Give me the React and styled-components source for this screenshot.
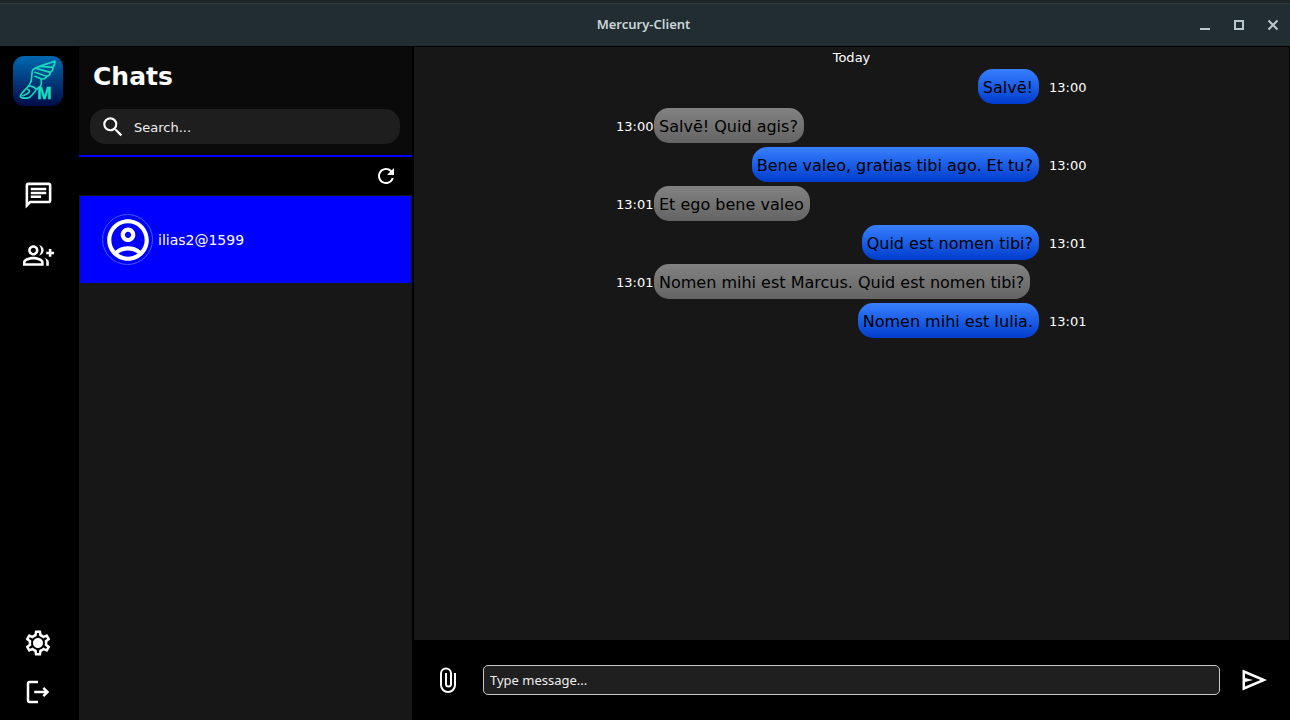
import React from "react";
import styled, { createGlobalStyle, css } from "styled-components";
import {
  MdOutlineChat,
  MdOutlineGroupAdd,
  MdOutlineLogout,
  MdOutlineSettings,
  MdOutlineAccountCircle,
  MdRefresh,
  MdSearch,
} from "react-icons/md";

const GlobalStyle = createGlobalStyle`
  * { box-sizing: border-box; }
  body {
    margin: 0;
    background: #000;
    color: #fff;
    font-family: "DejaVu Sans", sans-serif;
    font-size: 13px;
  }
  button, input { font: inherit; color: inherit; }
`;

const Window = styled.div`
  display: flex;
  flex-direction: column;
  height: 100vh;
`;

const TitleBar = styled.header`
  flex: none;
  display: grid;
  grid-template-columns: 1fr auto 1fr;
  align-items: center;
  height: 47px;
  padding: 3px 11px 0 8px;
  border-bottom: 1px solid #000;
  background: linear-gradient(#1c2528 0 3px, #2c383c 3px 4px, #222d31 4px);
`;

const WindowTitle = styled.h1`
  grid-column: 2;
  margin: 0;
  padding-bottom: 2px;
  color: #c9d6db;
  font: 600 13px/20px "Noto Sans", sans-serif;
`;

const WindowControls = styled.div`
  justify-self: end;
  display: flex;
  gap: 22px;
`;

const IconButton = styled.button`
  display: flex;
  align-items: center;
  justify-content: center;
  flex: none;
  width: ${({ $size }) => $size}px;
  height: ${({ $size }) => $size}px;
  padding: 0;
  border: 0;
  background: none;
  color: ${({ $color }) => $color || "#fff"};
  cursor: pointer;

  svg { flex: none; }
`;

const Body = styled.div`
  flex: 1;
  min-height: 0;
  display: grid;
  grid-template-columns: 79px 333px minmax(0, 1fr);
`;

const Rail = styled.nav`
  display: flex;
  flex-direction: column;
  justify-content: space-between;
  align-items: center;
  padding: 9px 3px 12px 0;
`;

const RailGroup = styled.div`
  display: flex;
  flex-direction: column;
  align-items: center;
  gap: ${({ $gap }) => $gap}px;
`;

const Logo = styled.svg`
  width: 50px;
  height: 50px;
  margin-bottom: 45px;
`;

const Sidebar = styled.aside`
  display: flex;
  flex-direction: column;
  background: #171717;
`;

const SidebarHeader = styled.div`
  padding: 15px 12px 11px 11px;
  border-bottom: 2px solid #00f;
  background: #0a0a0a;
`;

const Heading = styled.h2`
  margin: 0 3px 17px;
  font-size: 25px;
  line-height: 30px;
`;

const SearchBox = styled.label`
  display: flex;
  align-items: center;
  gap: 8px;
  height: 35px;
  padding: 0 10px;
  border-radius: 15px;
  background: #1e1e1e;
`;

const field = css`
  flex: 1;
  min-width: 0;
  outline: none;

  &::placeholder {
    color: #eee;
    opacity: 1;
  }
`;

const SearchInput = styled.input`
  ${field}
  padding: 2px 0 0;
  border: 0;
  background: none;
`;

const SidebarTools = styled.div`
  display: flex;
  justify-content: flex-end;
  padding: 7px 14px;
  background: #000;
`;

const ChatList = styled.ul`
  margin: 0;
  padding: 1px;
  list-style: none;
`;

const ChatItem = styled.button`
  display: flex;
  align-items: center;
  gap: 5px;
  width: 100%;
  height: 87px;
  padding: 0 22px;
  border: 0;
  background: #00f;
  font-size: 14px;
  cursor: pointer;
`;

const Avatar = styled.span`
  display: flex;
  align-items: center;
  justify-content: center;
  width: 51px;
  height: 51px;
  border: 1px solid #3f5fff;
  border-radius: 50%;

  svg { flex: none; }
`;

const Conversation = styled.main`
  display: flex;
  flex-direction: column;
  min-height: 0;
  padding: 0 1px 0 2px;
`;

const Messages = styled.section`
  flex: 1;
  min-height: 0;
  overflow: auto;
  display: flex;
  flex-direction: column;
  align-items: center;
  background: #171717;
`;

const Day = styled.div`
  height: 22px;
  line-height: 22px;
`;

const MessageList = styled.ol`
  display: flex;
  flex-direction: column;
  gap: 4px;
  width: 471px;
  max-width: 100%;
  margin: 0;
  padding: 0;
  list-style: none;
`;

const Message = styled.li`
  display: flex;
  align-items: center;
  flex-direction: ${({ $own }) => ($own ? "row-reverse" : "row")};
  gap: ${({ $own }) => ($own ? 10 : 0)}px;
`;

const Time = styled.time`
  flex: none;
  width: 38px;
  padding-top: 2px;
`;

const Bubble = styled.span`
  padding: 2px 6px 0 5px;
  border-radius: 15px;
  background: ${({ $own }) =>
    $own ? "linear-gradient(#3880ff, #003ccc)" : "linear-gradient(#828282, #646464)"};
  color: #000;
  font-size: 16px;
  line-height: 33px;
`;

const Composer = styled.form`
  flex: none;
  display: flex;
  align-items: center;
  gap: 19px;
  height: 80px;
  padding: 0 18px;
`;

const MessageInput = styled.input`
  ${field}
  height: 30px;
  padding: 0 6px;
  border: 1px solid #c8c8c8;
  border-radius: 5px;
  background: #1f1f1f;
  font-family: "Noto Sans", sans-serif;
`;

const messages = [
  { own: true, time: "13:00", text: "Salvē!" },
  { own: false, time: "13:00", text: "Salvē! Quid agis?" },
  { own: true, time: "13:00", text: "Bene valeo, gratias tibi ago. Et tu?" },
  { own: false, time: "13:01", text: "Et ego bene valeo" },
  { own: true, time: "13:01", text: "Quid est nomen tibi?" },
  { own: false, time: "13:01", text: "Nomen mihi est Marcus. Quid est nomen tibi?" },
  { own: true, time: "13:01", text: "Nomen mihi est Iulia." },
];

function MercuryLogo() {
  return (
    <Logo viewBox="0 0 150 150" role="img" aria-label="Mercury">
      <defs>
        <linearGradient id="logo-bg" x1="0" y1="0" x2="0" y2="1">
          <stop offset="0" stopColor="#0068b0" />
          <stop offset="1" stopColor="#000c48" />
        </linearGradient>
      </defs>
      <rect width="150" height="150" rx="34" fill="url(#logo-bg)" />
      <g fill="none" stroke="#17d9bd" strokeWidth="5" strokeLinejoin="round" strokeLinecap="round">
        <path d="M54 76 C58 64 55 50 59 42 C70 30 98 27 126 15 C126 24 124 30 119 34 C121 41 118 46 112 49 C112 56 107 60 101 61 C97 69 90 70 84 68 L66 61" />
        <path d="M119 34 L82 31 M112 49 L72 38 M101 61 L66 49" />
        <path d="M54 76 C50 94 24 108 22 121 C25 128 38 127 48 125 C60 118 64 106 74 97 C84 91 88 86 84 68" />
        <path d="M48 91 C56 88 62 92 70 99 M44 100 C54 104 50 112 30 119" />
      </g>
      <text x="73" y="128" fill="#17e0c0" stroke="#17e0c0" strokeWidth="1" fontFamily="Liberation Sans, sans-serif" fontWeight="700" fontSize="52">M</text>
    </Logo>
  );
}

function SettingsIcon() {
  return (
    <svg width="30" height="30" viewBox="0 0 24 24" fill="currentColor">
      <MdOutlineSettings size={24} />
      <circle cx="12" cy="12" r="3" />
    </svg>
  );
}

function PaperclipIcon() {
  return (
    <svg width="18" height="26" viewBox="0 0 18 26" fill="none" stroke="currentColor" strokeWidth="2">
      <path d="M16 6V18a7 7 0 0 1-14 0V6.500a5 5 0 0 1 10 0V17a2.500 2.500 0 0 1-5 0V6" />
    </svg>
  );
}

function SendIcon() {
  return (
    <svg width="32" height="32" viewBox="0 0 32 32" fill="currentColor">
      <path d="M3.500 26.500V5.500L28 16zM6 22.500 21.500 16 6 9.500V14l8 2-8 2z" />
    </svg>
  );
}

function ControlIcon({ d }) {
  return (
    <svg width="12" height="12" viewBox="0 0 12 12" fill="none" stroke="currentColor" strokeWidth="2">
      <path d={d} />
    </svg>
  );
}

export default function App() {
  return (
    <>
      <GlobalStyle />
      <Window>
        <TitleBar>
          <WindowTitle>Mercury-Client</WindowTitle>
          <WindowControls>
            <IconButton $size={12} $color="#b9c7ce" aria-label="Minimize">
              <ControlIcon d="M1 10H11" />
            </IconButton>
            <IconButton $size={12} $color="#b9c7ce" aria-label="Maximize">
              <ControlIcon d="M2 2H10V10H2Z" />
            </IconButton>
            <IconButton $size={12} $color="#b9c7ce" aria-label="Close">
              <ControlIcon d="M1.500 1.500L10.500 10.500M10.500 1.500L1.500 10.500" />
            </IconButton>
          </WindowControls>
        </TitleBar>
        <Body>
          <Rail aria-label="Main">
            <RailGroup $gap={28}>
              <MercuryLogo />
              <IconButton $size={32} aria-label="Chats"><MdOutlineChat size={31} /></IconButton>
              <IconButton $size={32} aria-label="Add contact"><MdOutlineGroupAdd size={31} /></IconButton>
            </RailGroup>
            <RailGroup $gap={17}>
              <IconButton $size={32} aria-label="Settings"><SettingsIcon /></IconButton>
              <IconButton $size={32} aria-label="Log out"><MdOutlineLogout size={30} /></IconButton>
            </RailGroup>
          </Rail>
          <Sidebar>
            <SidebarHeader>
              <Heading>Chats</Heading>
              <SearchBox>
                <MdSearch size={26} aria-hidden="true" />
                <SearchInput type="search" placeholder="Search..." aria-label="Search" />
              </SearchBox>
            </SidebarHeader>
            <SidebarTools>
              <IconButton $size={24} aria-label="Refresh"><MdRefresh size={24} /></IconButton>
            </SidebarTools>
            <ChatList>
              <li>
                <ChatItem>
                  <Avatar><MdOutlineAccountCircle size={50} /></Avatar>
                  ilias2@1599
                </ChatItem>
              </li>
            </ChatList>
          </Sidebar>
          <Conversation>
            <Messages>
              <Day>Today</Day>
              <MessageList>
                {messages.map((m, i) => (
                  <Message key={i} $own={m.own}>
                    <Time>{m.time}</Time>
                    <Bubble $own={m.own}>{m.text}</Bubble>
                  </Message>
                ))}
              </MessageList>
            </Messages>
            <Composer onSubmit={(e) => e.preventDefault()}>
              <IconButton $size={32} type="button" aria-label="Attach file"><PaperclipIcon /></IconButton>
              <MessageInput placeholder="Type message..." aria-label="Message" />
              <IconButton $size={32} type="submit" aria-label="Send"><SendIcon /></IconButton>
            </Composer>
          </Conversation>
        </Body>
      </Window>
    </>
  );
}
